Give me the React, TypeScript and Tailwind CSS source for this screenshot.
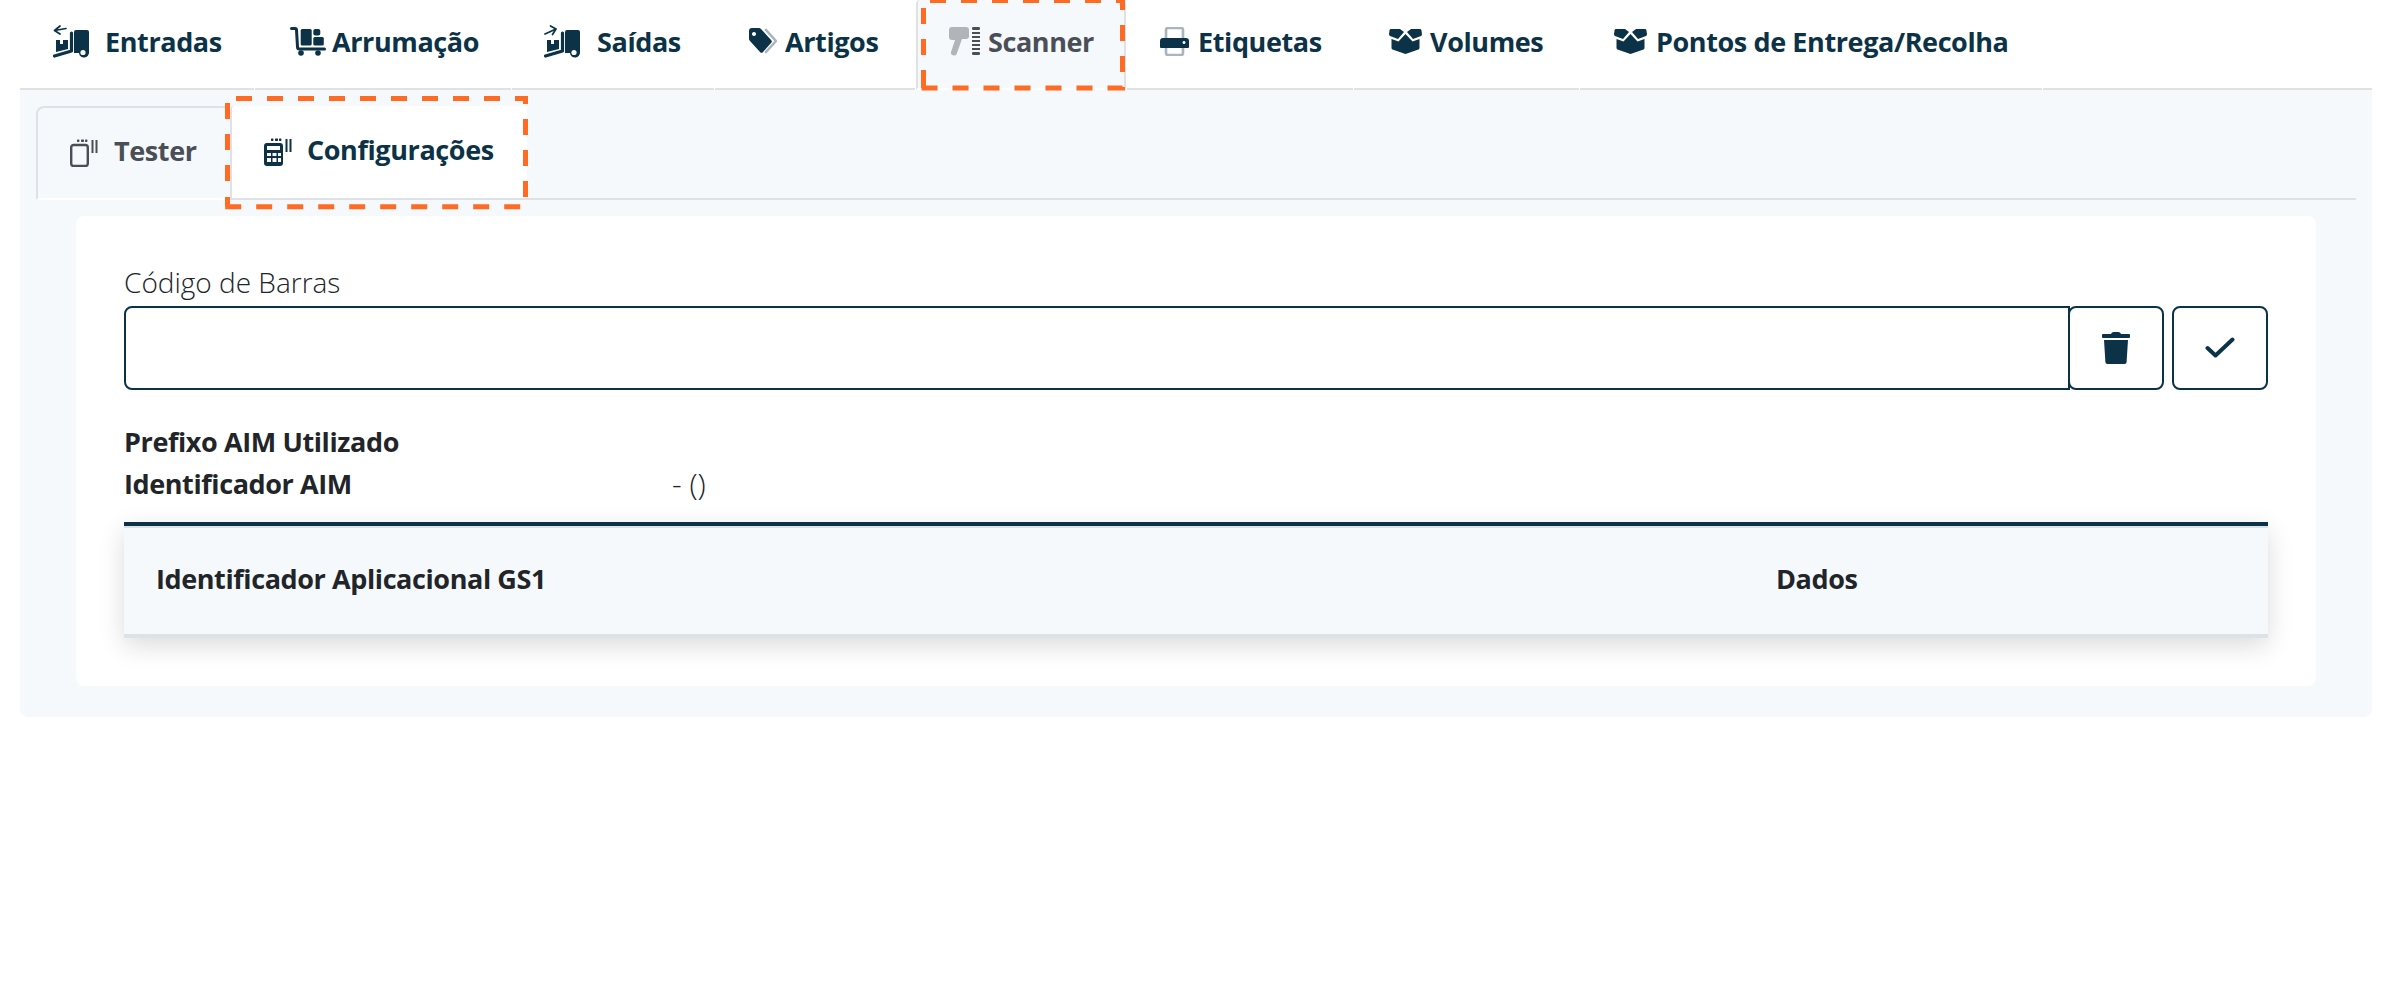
function Arrow({ out }: { out?: boolean }) {
  return out ? (
    <path d="M1 9 L12 4 M12 4 L6.5 1 M12 4 L8.5 9.5" fill="none" stroke="currentColor" strokeWidth="1.7" strokeLinecap="round" />
  ) : (
    <path d="M1.5 5.5 L13 3.5 M1.5 5.5 L7 1 M1.5 5.5 L7 9" fill="none" stroke="currentColor" strokeWidth="1.7" strokeLinecap="round" />
  );
}

function Dolly({ out }: { out?: boolean }) {
  return (
    <svg width="36" height="33" viewBox="0 0 36 33" fill="currentColor" className="shrink-0">
      <Arrow out={out} />
      <path d="M21 7 a2 2 0 0 1 2-2 h11 a2 2 0 0 1 2 2 V27 a5 5 0 0 1-10 1 H21 Z" />
      <path d="M1.5 31 L18.5 26 V8" fill="none" stroke="currentColor" strokeWidth="3.2" strokeLinecap="round" strokeLinejoin="round" />
      <path d="M3 15 h4 v4 h3 v-4 h5 v9 l-12 3 Z" />
      <circle cx="30" cy="27.5" r="2.6" fill="#fff" />
    </svg>
  );
}

function Cart() {
  return (
    <svg width="36" height="29" viewBox="0 0 36 29" fill="currentColor" className="shrink-0">
      <path d="M1.5 1.5 H5 a1.5 1.5 0 0 1 1.5 1.5 L7.5 20 a2 2 0 0 0 2 2 H34.5" fill="none" stroke="currentColor" strokeWidth="3" strokeLinecap="round" />
      <circle cx="11" cy="26" r="2.8" />
      <circle cx="28" cy="26" r="2.8" />
      <rect x="10.7" y="2" width="11" height="16.5" rx="1.5" />
      <rect x="23.3" y="2" width="7" height="6.5" rx="2" />
      <rect x="23.3" y="10" width="10.5" height="8.5" rx="1.5" />
    </svg>
  );
}

function Tags() {
  return (
    <svg width="28" height="26" viewBox="0 0 28 26" className="shrink-0">
      <path d="M17 2 L27 13 L17 24" fill="none" stroke="#a9b4bd" strokeWidth="2.6" strokeLinecap="round" strokeLinejoin="round" />
      <path fillRule="evenodd" fill="currentColor" d="M0 3 a3 3 0 0 1 3-3 H10 a3 3 0 0 1 2 1 L22 12 a2 2 0 0 1 0 3 L14 24 a2 2 0 0 1-3 0 L1 13 a3 3 0 0 1-1-2 Z M5 4 a2 2 0 1 0 .01 0 Z" />
    </svg>
  );
}

function ScannerIcon() {
  return (
    <svg width="31" height="30" viewBox="0 0 31 30" className="shrink-0">
      <path fill="#b1b5b9" d="M3 1 H17 a3 3 0 0 1 3 3 V11 a3 3 0 0 1-3 2 L13 13 L8 27 a3 3 0 0 1-6-1 L6 14 H3 a3 3 0 0 1-3-3 V4 a3 3 0 0 1 3-3 Z" />
      <g fill="#4a4f57">
        <rect x="23" y="1" width="8" height="3" rx="1.2" />
        <rect x="23" y="6" width="8" height="2" />
        <rect x="23" y="10" width="8" height="2" />
        <rect x="23" y="14" width="8" height="2" />
        <rect x="23" y="18" width="8" height="2" />
        <rect x="23" y="22" width="8" height="2" />
        <rect x="23" y="26" width="8" height="3" rx="1.2" />
      </g>
    </svg>
  );
}

function Printer() {
  return (
    <svg width="29" height="29" viewBox="0 0 29 29" className="shrink-0">
      <path d="M6 12 V3 a2 2 0 0 1 2-2 H21 a2 2 0 0 1 2 2 V12 M6 20 V26 a2 2 0 0 0 2 2 H21 a2 2 0 0 0 2-2 V20" fill="none" stroke="#a9b4bd" strokeWidth="2.6" />
      <path fill="currentColor" fillRule="evenodd" d="M3 11 H26 a3 3 0 0 1 3 3 V20 a1 1 0 0 1-1 1 H1 a1 1 0 0 1-1-1 V14 a3 3 0 0 1 3-3 Z M24 14 a1.5 1.5 0 1 0 .01 0 Z" />
    </svg>
  );
}

function BoxOpen() {
  return (
    <svg width="33" height="25" viewBox="0 0 33 25" fill="currentColor" className="shrink-0">
      <path d="M2 0 H11 L15 3 L9 10 L1 7 Q0 6.5 0 5 L.6 1.2 Q.8 0 2 0 Z" />
      <path d="M31 0 H22 L18 3 L24 10 L32 7 Q33 6.5 33 5 L32.4 1.2 Q32.2 0 31 0 Z" />
      <path d="M2.5 10 L9.5 12.5 L16.5 5 L23.5 12.5 L30.5 10 V19 Q30.5 20 29.5 20.4 L16.5 25 L3.5 20.4 Q2.5 20 2.5 19 Z" />
    </svg>
  );
}

function TesterIcon({ filled }: { filled?: boolean }) {
  return (
    <svg width="28" height="28" viewBox="0 0 28 28" fill="currentColor" className="shrink-0">
      <rect x="7" y="0.5" width="2.4" height="2.4" rx=".6" />
      <rect x="11" y="0.5" width="3" height="2.4" rx=".6" />
      <rect x="15" y="0.5" width="2.4" height="2.4" rx=".6" />
      <rect x="21.5" y="1" width="2" height="13" />
      <rect x="25.5" y="1" width="2" height="13" />
      {filled ? (
        <path fillRule="evenodd" d="M3 5 H16 a3 3 0 0 1 3 3 V25 a3 3 0 0 1-3 3 H3 a3 3 0 0 1-3-3 V8 a3 3 0 0 1 3-3 Z M3 8 V12 H16 V8 Z M3 15 V18 H7 V15 Z M8.5 15 V18 H12.5 V15 Z M14 15 V18 H17 V15 Z M3 20 V24 H7 V20 Z M8.5 20 V24 H12.5 V20 Z M14 20 V24 H17 V20 Z" />
      ) : (
        <rect x="1.2" y="6" width="16.6" height="21" rx="2.4" fill="none" stroke="currentColor" strokeWidth="2.4" />
      )}
    </svg>
  );
}

function Trash() {
  return (
    <svg width="28" height="32" viewBox="0 0 28 32" fill="currentColor">
      <path d="M9 2 Q9.5 0 12 0 H16 Q18.5 0 19 2 H27 a1 1 0 0 1 1 1 V5 a1 1 0 0 1-1 1 H1 a1 1 0 0 1-1-1 V3 a1 1 0 0 1 1-1 Z" />
      <path d="M2 8 H26 L24.6 30 a2 2 0 0 1-2 2 H5.4 a2 2 0 0 1-2-2 Z" />
    </svg>
  );
}

function Check() {
  return (
    <svg width="30" height="22" viewBox="0 0 30 22">
      <path d="M2.5 11 L10.5 18.5 L27.5 2.5" fill="none" stroke="currentColor" strokeWidth="4" strokeLinecap="round" strokeLinejoin="round" />
    </svg>
  );
}

function NavTab({ w, pl, gap, icon, label, active }: { w: string; pl: string; gap: string; icon: React.ReactNode; label: string; active?: boolean }) {
  return (
    <div
      className={`flex items-center h-[90px] mr-[1px] ${w} ${pl} ${gap} ${
        active
          ? "bg-[#f5f9fc] border-x-2 border-[#dee2e6] border-b-2 border-b-white text-[#4a4f57] rounded-t"
          : "border-b-2 border-[#dee2e6]"
      }`}
    >
      <span className="flex pb-[6px]">{icon}</span>
      <span className="font-bold whitespace-nowrap pb-[5px]">{label}</span>
    </div>
  );
}

function DashedFrames() {
  return (
    <svg width="2394" height="230" viewBox="0 0 2394 230" className="absolute top-0 left-0 pointer-events-none" fill="none" stroke="#ff6b23" strokeWidth="5">
      <path d="M930 0.5 H1122.5 V88 H921" strokeDasharray="16 15" />
      <path d="M923.5 55 V0" strokeDasharray="16 15" />
      <path d="M923.5 70 V88" />
      <path d="M236 98.5 H525.5 V206.7 H225" strokeDasharray="16 15" />
      <path d="M227.5 181 V100" strokeDasharray="16 15" />
      <path d="M227.5 197 V206.7" />
    </svg>
  );
}

export default function App() {
  return (
    <div className="min-h-[998px] bg-white pl-[20px] pr-[22px] text-[27px] leading-[42px] tracking-[-0.4px] text-[#0c3247] font-['Open_Sans',sans-serif] [font-stretch:90%]">
      <nav className="flex">
        <NavTab w="w-[234px]" pl="pl-[33px]" gap="gap-[16px]" icon={<Dolly />} label="Entradas" />
        <NavTab w="w-[256px]" pl="pl-[35px]" gap="gap-[6px]" icon={<Cart />} label="Arrumação" />
        <NavTab w="w-[202px]" pl="pl-[32px]" gap="gap-[17px]" icon={<Dolly out />} label="Saídas" />
        <NavTab w="w-[200px]" pl="pl-[34px]" gap="gap-[8px]" icon={<Tags />} label="Artigos" />
        <NavTab w="w-[210px]" pl="pl-[31px]" gap="gap-[8px]" icon={<ScannerIcon />} label="Scanner" active />
        <NavTab w="w-[226px]" pl="pl-[33px]" gap="gap-[9px]" icon={<Printer />} label="Etiquetas" />
        <NavTab w="w-[225px]" pl="pl-[35px]" gap="gap-[8px]" icon={<BoxOpen />} label="Volumes" />
        <NavTab w="w-[462px]" pl="pl-[34px]" gap="gap-[9px]" icon={<BoxOpen />} label="Pontos de Entrega/Recolha" />
        <div className="flex-1 border-b-2 border-[#dee2e6]" />
      </nav>

      <main className="rounded-b-lg bg-[#f5f9fc] px-[16px] pt-[16px] pb-[31px]">
        <div className="flex h-[94px] border-b-2 border-[#dee2e6]">
          <div className="flex w-[194px] h-[94px] items-center gap-[16px] rounded-tl-lg border-l-2 border-t-2 border-b-2 border-[#dee2e6] border-b-white pl-[32px] text-[#4a4f57]">
            <TesterIcon />
            <span className="font-bold pb-[5px]">Tester</span>
          </div>
          <div className="flex w-[297px] h-[94px] items-center gap-[15px] rounded-t border-l-2 border-b-2 border-[#dee2e6] bg-white pl-[32px]">
            <TesterIcon filled />
            <span className="font-bold pb-[5px]">Configurações</span>
          </div>
        </div>

        <section className="mx-[40px] mt-[16px] rounded-lg bg-white p-[48px]">
          <label className="block font-light text-[28px] tracking-normal text-[#212529] [font-stretch:100%] h-[42px] -mt-[3px] mb-[3px]">Código de Barras</label>
          <div className="flex">
            <div className="h-[84px] flex-1 rounded-l-lg border-2 border-[#0c3247] bg-white" />
            <button className="-ml-[2px] flex h-[84px] w-[96px] items-center justify-center rounded-r-lg rounded-l-lg border-2 border-[#0c3247]">
              <Trash />
            </button>
            <button className="ml-[8px] flex h-[84px] w-[96px] items-center justify-center rounded-lg border-2 border-[#0c3247]">
              <Check />
            </button>
          </div>

          <div className="mt-[31px] text-[#212529]">
            <div className="font-bold">Prefixo AIM Utilizado</div>
            <div className="flex">
              <div className="w-[548px] font-bold">Identificador AIM</div>
              <div className="font-light text-[30px] tracking-normal [font-stretch:100%]">- ()</div>
            </div>
          </div>

          <div className="mt-[17px] flex h-[116px] items-center border-t-[4px] border-b-[4px] border-[#0c3247] border-b-[#dee2e6] bg-[#f5f9fc] font-bold text-[#212529] shadow-[inset_0_2px_0_#dee2e6,0_8px_24px_rgba(0,0,0,0.14)]">
            <div className="w-[1620px] pl-[32px] pb-[3px]">Identificador Aplicacional GS1</div>
            <div className="pl-[32px] pb-[3px]">Dados</div>
          </div>
        </section>
      </main>

      <DashedFrames />
    </div>
  );
}
